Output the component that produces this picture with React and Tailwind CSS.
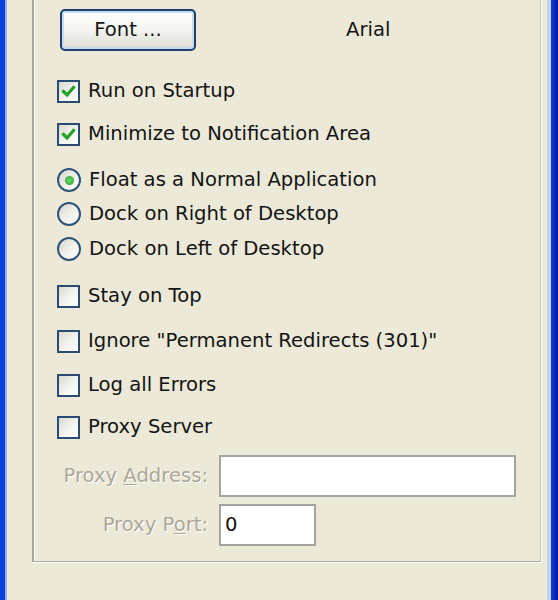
import React from "react";

const font = { fontFamily: '"DejaVu Sans", Verdana, sans-serif' };

function Check({ checked }) {
  return (
    <span className="flex h-[23px] w-[23px] shrink-0 items-center justify-center border-2 border-[#2a4c72] bg-linear-to-br from-[#d9d9d0] via-[#f2f2ee] to-white">
      {checked && (
        <svg width="15" height="15" viewBox="0 0 15 15">
          <path d="M2.5 7.5 L6 11 L12.5 3.5" fill="none" stroke="#21a121" strokeWidth="3.2" strokeLinecap="square" />
        </svg>
      )}
    </span>
  );
}

function Radio({ checked }) {
  return (
    <span className="flex h-[24px] w-[24px] shrink-0 items-center justify-center rounded-full border-2 border-[#2f5378] bg-linear-to-br from-[#d5d5cc] via-[#f0f0ea] to-white">
      {checked && (
        <span className="h-[9px] w-[9px] rounded-full bg-radial from-[#6fe06f] to-[#1c991c]" />
      )}
    </span>
  );
}

function Row({ children, control, className }) {
  return (
    <div className={"flex h-[24px] items-center gap-[8px] " + className}>
      {control}
      <span className="text-[19.6px] leading-none text-[#141414]">{children}</span>
    </div>
  );
}

export default function App() {
  return (
    <div className="flex h-[600px] w-[558px] overflow-hidden bg-[#ece9d8]" style={font}>
      <div className="w-[5px] bg-[#0b3ddc]" />
      <div className="w-[2px] bg-[#8fb2f2]" />
      <div className="flex flex-1 flex-col">
        <div className="ml-[25px] mr-[6px] flex flex-col border-b border-l-2 border-r border-b-[#a9a89c] border-l-[#a9a89c] border-r-[#c4c3b6] pb-[15px] shadow-[1px_1px_0_0_#ffffff,inset_1px_0_0_0_#ffffff]">
          <div className="mt-[9px] flex items-center">
            <div className="ml-[26px] flex h-[42px] w-[136px] items-center justify-center rounded-[5px] border-2 border-[#1f3f6e] bg-linear-to-b from-white via-[#f4f4f0] to-[#dcdcd4] shadow-[inset_0_0_0_2px_#c7dbf5] text-[19.6px] text-[#141414]">
              Font ...
            </div>
            <span className="ml-[150px] text-[19.6px] text-[#141414]">Arial</span>
          </div>
          <div className="ml-[23px] flex flex-col">
            <Row className="mt-[28px]" control={<Check checked />}>Run on Startup</Row>
            <Row className="mt-[19px]" control={<Check checked />}>Minimize to Notification Area</Row>
            <Row className="mt-[22px]" control={<Radio checked />}>Float as a Normal Application</Row>
            <Row className="mt-[10px]" control={<Radio />}>Dock on Right of Desktop</Row>
            <Row className="mt-[11px]" control={<Radio />}>Dock on Left of Desktop</Row>
            <Row className="mt-[23px]" control={<Check />}>Stay on Top</Row>
            <Row className="mt-[21px]" control={<Check />}>Ignore "Permanent Redirects (301)"</Row>
            <Row className="mt-[20px]" control={<Check />}>Log all Errors</Row>
            <Row className="mt-[18px]" control={<Check />}>Proxy Server</Row>
          </div>
          <div className="mt-[16px] flex items-center">
            <span className="w-[185px] pr-[11px] text-right text-[19.6px] text-[#aca899] [text-shadow:1px_1px_0_#ffffff]">
              Proxy <span className="underline underline-offset-2">A</span>ddress:
            </span>
            <div className="h-[42px] w-[297px] border-2 border-[#a3a3a0] bg-white" />
          </div>
          <div className="mt-[7px] flex items-center">
            <span className="w-[185px] pr-[11px] text-right text-[19.6px] text-[#aca899] [text-shadow:1px_1px_0_#ffffff]">
              Proxy P<span className="underline underline-offset-2">o</span>rt:
            </span>
            <div className="flex h-[42px] w-[97px] items-center border-2 border-[#a3a3a0] bg-white pl-[4px] text-[19.6px] text-[#111]">
              0
            </div>
          </div>
        </div>
      </div>
      <div className="w-[4px] bg-[#bcd4f4]" />
      <div className="w-[7px] bg-linear-to-r from-[#1a3ad0] to-[#0018a8]" />
    </div>
  );
}
